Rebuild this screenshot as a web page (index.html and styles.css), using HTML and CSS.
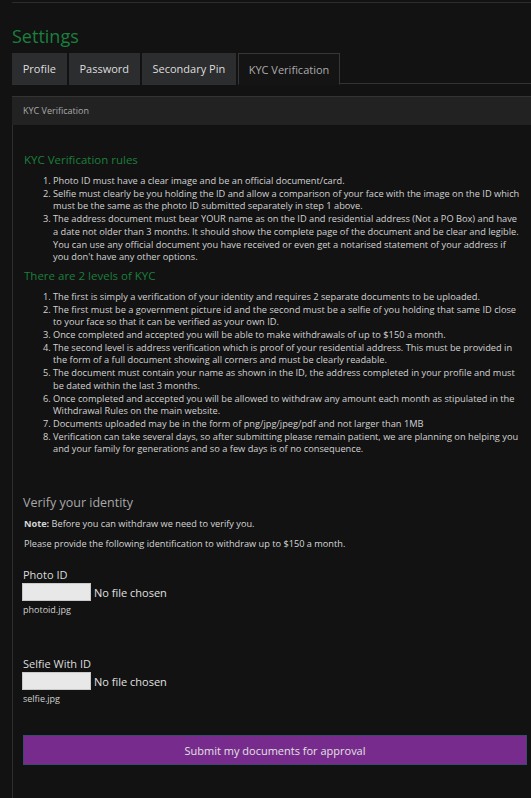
FILE: index.html
```html
<!DOCTYPE html>
<html lang="en">
<head>
<meta charset="utf-8">
<title>Settings</title>
<link rel="stylesheet" href="styles.css">
</head>
<body>
<div class="page">
  <div class="topbar"></div>
  <h1 class="title">Settings</h1>
  <nav class="tabs">
    <a class="tab">Profile</a>
    <a class="tab">Password</a>
    <a class="tab">Secondary Pin</a>
    <a class="tab active">KYC Verification</a>
    <span class="tabs-fill"></span>
  </nav>
  <section class="panel">
    <div class="panel-head">KYC Verification</div>
    <div class="panel-body">
      <h2 class="rules-title">KYC Verification rules</h2>
      <ol class="rules">
        <li>Photo ID must have a clear image and be an official document/card.</li>
        <li>Selfie must clearly be you holding the ID and allow a comparison of your face with the image on the ID which must be the same as the photo ID submitted separately in step 1 above.</li>
        <li>The address document must bear YOUR name as on the ID and residential address (Not a PO Box) and have a date not older than 3 months. It should show the complete page of the document and be clear and legible. You can use any official document you have received or even get a notarised statement of your address if you don't have any other options.</li>
      </ol>
      <h2 class="rules-title">There are 2 levels of KYC</h2>
      <ol class="rules">
        <li>The first is simply a verification of your identity and requires 2 separate documents to be uploaded.</li>
        <li>The first must be a government picture id and the second must be a selfie of you holding that same ID close to your face so that it can be verified as your own ID.</li>
        <li>Once completed and accepted you will be able to make withdrawals of up to $150 a month.</li>
        <li>The second level is address verification which is proof of your residential address. This must be provided in the form of a full document showing all corners and must be clearly readable.</li>
        <li>The document must contain your name as shown in the ID, the address completed in your profile and must be dated within the last 3 months.</li>
        <li>Once completed and accepted you will be allowed to withdraw any amount each month as stipulated in the Withdrawal Rules on the main website.</li>
        <li>Documents uploaded may be in the form of png/jpg/jpeg/pdf and not larger than 1MB</li>
        <li>Verification can take several days, so after submitting please remain patient, we are planning on helping you and your family for generations and so a few days is of no consequence.</li>
      </ol>
      <h3 class="verify-title">Verify your identity</h3>
      <p class="note"><strong>Note:</strong> Before you can withdraw we need to verify you.</p>
      <p class="note">Please provide the following identification to withdraw up to $150 a month.</p>
      <div class="field">
        <label class="field-label">Photo ID</label>
        <div class="file-row"><span class="file-btn"></span><span class="file-text">No file chosen</span></div>
        <div class="file-name">photoid.jpg</div>
      </div>
      <div class="field field-second">
        <label class="field-label">Selfie With ID</label>
        <div class="file-row"><span class="file-btn"></span><span class="file-text">No file chosen</span></div>
        <div class="file-name">selfie.jpg</div>
      </div>
      <button class="submit" type="button">Submit my documents for approval</button>
    </div>
  </section>
</div>
</body>
</html>
```
FILE: styles.css
```css
html, body {
  margin: 0;
  padding: 0;
  background: #121212;
  overflow: hidden;
}
body {
  font-family: "Open Sans", "DejaVu Sans", sans-serif;
  color: #d4d4d4;
}
.page {
  padding: 2px 0 0 12px;
}
.topbar {
  border-top: 1px solid #2c2c2c;
}
.title {
  margin: 21px 0 0;
  font-size: 18px;
  line-height: 24px;
  font-weight: 400;
  color: #1b7f3d;
}
.tabs {
  display: flex;
  gap: 2px;
  margin-top: 5px;
  height: 31px;
}
.tab {
  display: flex;
  align-items: center;
  padding: 0 10.75px;
  height: 31px;
  font-size: 11px;
  color: #dedede;
  background: #2c2d2f;
  border-bottom: 1px solid #2f2f2f;
}
.tab.active {
  background: #141414;
  color: #ababab;
  border: 1px solid #363636;
  border-bottom: 1px solid #141414;
  height: 30px;
  padding: 0 9.75px;
}
.tabs-fill {
  flex: 1;
  border-bottom: 1px solid #333;
  margin-left: -2px;
}
.panel {
  margin-top: 12px;
}
.panel-head {
  height: 28px;
  border-top: 1px solid #333;
  background: #222;
  padding-left: 11px;
  font-size: 9px;
  line-height: 28px;
  color: #a9a9a9;
}
.panel-body {
  border-left: 1px solid #2e2e2e;
  padding: 27px 4px 40px 11px;
}
.rules-title {
  margin: 0 0 8px;
  font-size: 11.5px;
  line-height: 15px;
  font-weight: 400;
  color: #1b7f3d;
}
.rules {
  margin: 0 0 4px;
  padding: 0 3px 0 29px;
  font-size: 9.25px;
  line-height: 12.7px;
  color: #d2d2d2;
}
.verify-title {
  margin: 39px 0 7px -1px;
  font-size: 12.5px;
  line-height: 16px;
  font-weight: 400;
  color: #a8a8a8;
}
.note {
  margin: 0 0 8px;
  font-size: 9.2px;
  line-height: 12px;
  color: #d6d6d6;
}
.note strong {
  font-weight: 700;
}
.field {
  margin: 18px 0 0 -1px;
}
.field-second {
  margin-top: 41.5px;
}
.field-label {
  display: block;
  font-size: 11px;
  line-height: 14px;
  color: #dcdcdc;
  margin-bottom: 1px;
}
.file-row {
  display: flex;
  align-items: center;
  gap: 3px;
  height: 18px;
  margin-left: -1px;
}
.file-btn {
  width: 67px;
  height: 16px;
  background: #e8e8e8;
  border: 1px solid #c9c9c9;
}
.file-text {
  font-size: 11px;
  color: #e0e0e0;
}
.file-name {
  margin-top: 2.5px;
  font-size: 9px;
  line-height: 12px;
  color: #d0d0d0;
}
.submit {
  display: block;
  width: calc(100% + 1px);
  height: 30px;
  margin: 30.5px 0 0 -1px;
  background: #772b8c;
  border: 1px solid #3b4a6c;
  color: #e2e2e2;
  font-family: "Open Sans", "DejaVu Sans", sans-serif;
  font-size: 11px;
  padding: 0;
}
```
